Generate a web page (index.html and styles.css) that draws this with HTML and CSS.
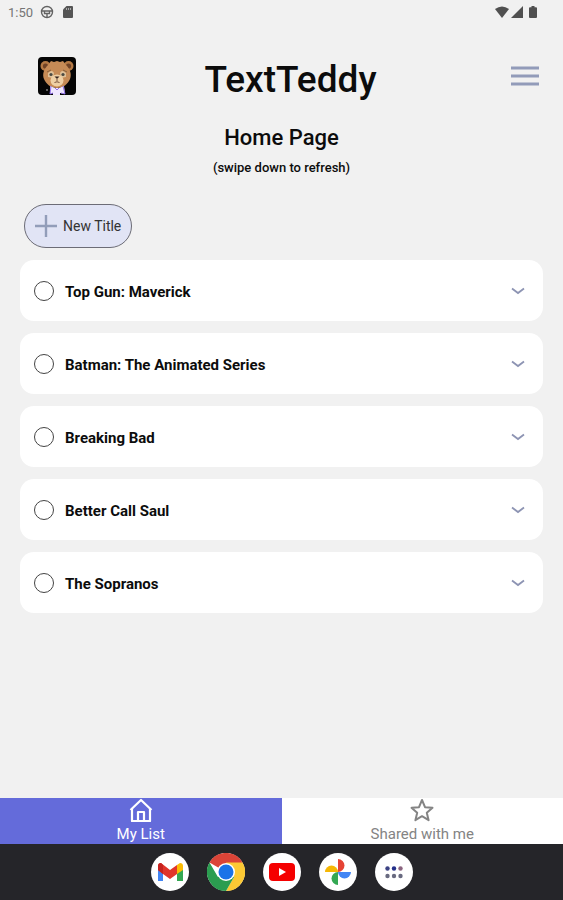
FILE: index.html
```
<!DOCTYPE html>
<html lang="en">
<head>
    <meta charset="UTF-8">
    <meta name="viewport" content="width=device-width, initial-scale=1.0">
    <title>TextTeddy</title>
    <link rel="stylesheet" href="styles.css">
</head>
<body>
    <div class="status-bar">
        <span class="clock">1:50</span>
        <svg class="status-icon" width="14" height="14" viewBox="0 0 14 14" fill="none" stroke="#636363" stroke-width="1.4">
            <circle cx="7" cy="7" r="5.5"/>
            <path d="M2 6h10M7 8.5v4M4.5 6v2.5h5V6"/>
        </svg>
        <svg class="status-icon" width="12" height="14" viewBox="0 0 12 14">
            <path d="M4.5 1H10a1 1 0 0 1 1 1v10a1 1 0 0 1-1 1H2a1 1 0 0 1-1-1V4.5z" fill="#555"/>
            <path d="M4.5 3v2M6.5 3v2M8.5 3v2" stroke="#aaa" stroke-width="1"/>
        </svg>
        <div class="status-right">
            <svg width="14" height="12" viewBox="0 0 14 12"><path d="M0 3Q7-2 14 3L7 12z" fill="#505050"/></svg>
            <svg width="12" height="12" viewBox="0 0 12 12"><path d="M12 0v12H0z" fill="#505050"/></svg>
            <svg class="battery" width="8" height="12" viewBox="0 0 8 12"><path d="M2.5 0h3v1.2H7a1 1 0 0 1 1 1V11a1 1 0 0 1-1 1H1a1 1 0 0 1-1-1V2.2a1 1 0 0 1 1-1h1.5z" fill="#505050"/></svg>
        </div>
    </div>

    <header class="app-header">
        <svg class="app-logo" viewBox="0 0 38 38">
            <rect width="38" height="38" rx="4" fill="#050505"/>
            <circle cx="7.5" cy="9" r="5" fill="#b57a45"/>
            <circle cx="30.5" cy="9" r="5" fill="#b57a45"/>
            <circle cx="7.5" cy="9" r="2.6" fill="#704326"/>
            <circle cx="30.5" cy="9" r="2.6" fill="#704326"/>
            <path d="M19 4l3 1 3-1 3 4c4 4 6 9 4 14-2 5-7 9-13 9S8 27 6 22c-2-5 0-10 4-14l3-4 3 1z" fill="#c68b56"/>
            <path d="M10 16q4-4 6 0l-1 5-5-1zM28 16q-4-4-6 0l1 5 5-1z" fill="#dfc199"/>
            <ellipse cx="19" cy="23.5" rx="6.5" ry="6" fill="#efd0a5"/>
            <circle cx="13" cy="17.5" r="1.6" fill="#4b4a42"/>
            <circle cx="25" cy="17.5" r="1.6" fill="#4b4a42"/>
            <path d="M9 15l4-2M29 15l-4-2" stroke="#85603d" stroke-width="1"/>
            <path d="M16.5 19.5h5L19 22z" fill="#38251f"/>
            <path d="M19 22v2M16.5 25.5q2.5-1.5 5 0" stroke="#76503b" stroke-width="1" fill="none"/>
            <path d="M12 29l5 2h4l5-2 1 8-5-1v2h-7v-2l-3 1z" fill="#f0e8ff"/>
            <path d="M13 29l-1 8 3-1M25 29l2 8-4-1M17 31l2 2 2-2" fill="none" stroke="#9271e8" stroke-width="1"/>
            <circle cx="9" cy="33" r="0.7" fill="#fff"/>
        </svg>
        <h1>TextTeddy</h1>
        <button type="button" class="menu-btn" aria-label="Menu">
            <svg width="28" height="20" viewBox="0 0 28 20"><path d="M0 2h28M0 10h28M0 18h28" stroke="#929bb9" stroke-width="3"/></svg>
        </button>
    </header>

    <main>
        <h2>Home Page</h2>
        <p class="hint">(swipe down to refresh)</p>

        <button type="button" class="new-btn">
            <svg width="22" height="22" viewBox="0 0 22 22"><path d="M11 0v22M0 11h22" stroke="#929db9" stroke-width="2.4"/></svg>
            New Title
        </button>

        <ul class="title-list">
            <li class="title-card">
                <input type="checkbox" id="title-1">
                <label for="title-1">Top Gun: Maverick</label>
                <button type="button" class="expand-btn" aria-label="Expand">
                    <svg width="14" height="8" viewBox="0 0 14 8"><path d="M1 1.5l6 4.5 6-4.5" fill="none" stroke="#8d94b3" stroke-width="1.8"/></svg>
                </button>
            </li>
            <li class="title-card">
                <input type="checkbox" id="title-2">
                <label for="title-2">Batman: The Animated Series</label>
                <button type="button" class="expand-btn" aria-label="Expand">
                    <svg width="14" height="8" viewBox="0 0 14 8"><path d="M1 1.5l6 4.5 6-4.5" fill="none" stroke="#8d94b3" stroke-width="1.8"/></svg>
                </button>
            </li>
            <li class="title-card">
                <input type="checkbox" id="title-3">
                <label for="title-3">Breaking Bad</label>
                <button type="button" class="expand-btn" aria-label="Expand">
                    <svg width="14" height="8" viewBox="0 0 14 8"><path d="M1 1.5l6 4.5 6-4.5" fill="none" stroke="#8d94b3" stroke-width="1.8"/></svg>
                </button>
            </li>
            <li class="title-card">
                <input type="checkbox" id="title-4">
                <label for="title-4">Better Call Saul</label>
                <button type="button" class="expand-btn" aria-label="Expand">
                    <svg width="14" height="8" viewBox="0 0 14 8"><path d="M1 1.5l6 4.5 6-4.5" fill="none" stroke="#8d94b3" stroke-width="1.8"/></svg>
                </button>
            </li>
            <li class="title-card">
                <input type="checkbox" id="title-5">
                <label for="title-5">The Sopranos</label>
                <button type="button" class="expand-btn" aria-label="Expand">
                    <svg width="14" height="8" viewBox="0 0 14 8"><path d="M1 1.5l6 4.5 6-4.5" fill="none" stroke="#8d94b3" stroke-width="1.8"/></svg>
                </button>
            </li>
        </ul>
    </main>

    <nav class="tab-bar">
        <button type="button" class="tab active">
            <svg width="24" height="24" viewBox="0 0 24 24" fill="none" stroke="currentColor" stroke-width="2.2" stroke-linejoin="round">
                <path d="M1.5 12L12 2l10.5 10M3 11v12h18V11"/>
                <path d="M9 23v-9h6v9"/>
            </svg>
            My List
        </button>
        <button type="button" class="tab">
            <svg width="24" height="24" viewBox="0 0 24 24" fill="none" stroke="currentColor" stroke-width="2" stroke-linejoin="round">
                <path d="M12 2l3 7.2 7.5.6-5.7 5 1.8 7.4-6.6-4-6.6 4 1.8-7.4-5.7-5L9 9.2z"/>
            </svg>
            Shared with me
        </button>
    </nav>

    <div class="dock">
        <button type="button" class="dock-btn" aria-label="Gmail">
            <svg viewBox="0 0 38 38">
                <path d="M7 13v15h5V17z" fill="#4285f4"/>
                <path d="M32 13v15h-6V17z" fill="#34a853"/>
                <path d="M26 12l3-2q3 0 3 3v4l-6 4z" fill="#fbbc04"/>
                <path d="M7 13q0-3 3-3l9 7 7-5v9l-7 5-7-5-5-4z" fill="#e0352b"/>
                <path d="M7 13q0-3 3-3l2 2v9l-5-4z" fill="#c5221f"/>
            </svg>
        </button>
        <button type="button" class="dock-btn" aria-label="Chrome">
            <svg viewBox="0 0 38 38">
                <path d="M19 19L2.5 9.5A19 19 0 0 1 35.5 9.5z" fill="#db4437"/>
                <path d="M19 9.5h16.5A19 19 0 0 1 19 38l8-14z" fill="#fcc934"/>
                <path d="M2.5 9.5A19 19 0 0 0 19 38l8.2-14.2H10.8z" fill="#2b9d50"/>
                <circle cx="19" cy="19" r="9" fill="#fff"/>
                <circle cx="19" cy="19" r="7.5" fill="#1a73e8"/>
            </svg>
        </button>
        <button type="button" class="dock-btn" aria-label="YouTube">
            <svg viewBox="0 0 38 38">
                <rect x="6" y="10" width="26" height="18" rx="4" fill="#f50000"/>
                <path d="M16 15l7 4-7 4z" fill="#fff"/>
            </svg>
        </button>
        <button type="button" class="dock-btn" aria-label="Photos">
            <svg viewBox="0 0 38 38">
                <path d="M19 19V6a6.5 6.5 0 0 1 0 13z" fill="#e54335"/>
                <path d="M19 19h13a6.5 6.5 0 0 1-13 0z" fill="#4285f4"/>
                <path d="M19 19v13a6.5 6.5 0 0 1 0-13z" fill="#34a853"/>
                <path d="M19 19H6a6.5 6.5 0 0 1 13 0z" fill="#f6b704"/>
            </svg>
        </button>
        <button type="button" class="dock-btn" aria-label="All apps">
            <svg viewBox="0 0 38 38">
                <circle cx="12.5" cy="15.5" r="2.2" fill="#3c4384"/>
                <circle cx="19" cy="15.5" r="2.2" fill="#24308a"/>
                <circle cx="25.5" cy="15.5" r="2.2" fill="#8b6580"/>
                <circle cx="12.5" cy="23" r="2.2" fill="#686a80"/>
                <circle cx="19" cy="23" r="2.2" fill="#686a80"/>
                <circle cx="25.5" cy="23" r="2.2" fill="#686a80"/>
            </svg>
        </button>
    </div>
</body>
</html>
```
FILE: styles.css
```
* {
    margin: 0;
    padding: 0;
    box-sizing: border-box;
}

body {
    font-family: Roboto, "Liberation Sans", sans-serif;
    background-color: #f1f1f1;
    color: #0c0c0c;
    display: flex;
    flex-direction: column;
    min-height: 100vh;
}

button {
    font-family: inherit;
    border: none;
    background: none;
    cursor: pointer;
}

svg {
    display: block;
    flex-shrink: 0;
}

.status-bar {
    display: flex;
    align-items: center;
    height: 24px;
    padding: 0 26px 0 8px;
}

.clock {
    font-size: 13px;
    color: #757575;
    margin-right: 7px;
}

.status-icon {
    margin-right: 8px;
}

.status-right {
    display: flex;
    align-items: center;
    gap: 2px;
    margin-left: auto;
}

.battery {
    margin-left: 4px;
}

.app-header {
    display: flex;
    align-items: center;
    padding: 24px 24px 0 38px;
}

.app-logo {
    width: 38px;
    height: 38px;
}

.app-header h1 {
    flex: 1;
    padding: 8px 6px 0 0;
    font-size: 37px;
    line-height: 48px;
    font-weight: 500;
    text-align: center;
}

main {
    flex: 1;
    padding: 18px 20px 24px;
}

h2 {
    font-size: 22px;
    line-height: 32px;
    font-weight: 500;
    text-align: center;
}

.hint {
    margin-top: 6px;
    font-size: 13px;
    line-height: 16px;
    font-weight: 500;
    text-align: center;
}

.new-btn {
    display: flex;
    align-items: center;
    gap: 6px;
    height: 44px;
    margin: 28px 0 12px 4px;
    padding: 0 10px;
    border: 1px solid #6c6c76;
    border-radius: 22px;
    background-color: #e1e4f5;
    color: #333;
    font-size: 14px;
}

.title-list {
    list-style: none;
    display: flex;
    flex-direction: column;
    gap: 12px;
}

.title-card {
    display: flex;
    align-items: center;
    height: 61px;
    padding: 0 18px 0 14px;
    border-radius: 14px;
    background-color: #fff;
}

.title-card input {
    appearance: none;
    width: 20px;
    height: 20px;
    border: 1px solid #444;
    border-radius: 50%;
}

.title-card input:checked {
    background-color: #646bda;
}

.title-card label {
    flex: 1;
    padding: 2px 0 0 11px;
    font-size: 15px;
    line-height: 20px;
    font-weight: 700;
}

.tab-bar {
    display: flex;
    background-color: #fff;
}

.tab {
    flex: 1;
    display: flex;
    flex-direction: column;
    align-items: center;
    gap: 2px;
    height: 46px;
    color: #848484;
    font-size: 15px;
    line-height: 20px;
}

.tab.active {
    background-color: #646bda;
    color: #fff;
}

.dock {
    display: flex;
    justify-content: center;
    align-items: center;
    gap: 18px;
    height: 56px;
    background-color: #252529;
}

.dock-btn {
    width: 38px;
    height: 38px;
    border-radius: 50%;
    background-color: #fff;
}
```
